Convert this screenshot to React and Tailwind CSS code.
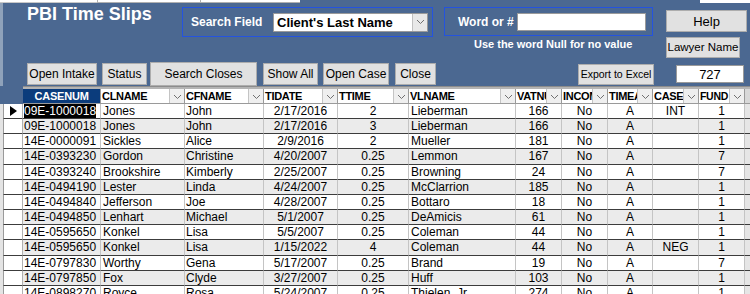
import React from 'react';

const font = "font-['Liberation_Sans',Arial,sans-serif]";

const columns = [
  { key: 'casenum', label: 'CASENUM', w: 'w-[78px]', align: 'text-left pl-[1px]' },
  { key: 'clname', label: 'CLNAME', w: 'w-[84px]', align: 'text-left pl-[2px]' },
  { key: 'cfname', label: 'CFNAME', w: 'w-[79px]', align: 'text-left pl-[1px]' },
  { key: 'tidate', label: 'TIDATE', w: 'w-[74px]', align: 'text-center' },
  { key: 'ttime', label: 'TTIME', w: 'w-[71px]', align: 'text-center' },
  { key: 'vlname', label: 'VLNAME', w: 'w-[107px]', align: 'text-left pl-[2px]' },
  { key: 'vatnum', label: 'VATNUM', w: 'w-[46px]', align: 'text-center' },
  { key: 'income', label: 'INCOME', w: 'w-[46px]', align: 'text-center' },
  { key: 'timea', label: 'TIMEAB', w: 'w-[45px]', align: 'text-center' },
  { key: 'casetype', label: 'CASETYPE', w: 'w-[46px]', align: 'text-center' },
  { key: 'fund', label: 'FUND', w: 'w-[46px]', align: 'text-center' },
];

const rows = [
  ['09E-1000018', 'Jones', 'John', '2/17/2016', '2', 'Lieberman', '166', 'No', 'A', 'INT', '1'],
  ['09E-1000018', 'Jones', 'John', '2/17/2016', '3', 'Lieberman', '166', 'No', 'A', '', '1'],
  ['14E-0000091', 'Sickles', 'Alice', '2/9/2016', '2', 'Mueller', '181', 'No', 'A', '', '1'],
  ['14E-0393230', 'Gordon', 'Christine', '4/20/2007', '0.25', 'Lemmon', '167', 'No', 'A', '', '7'],
  ['14E-0393240', 'Brookshire', 'Kimberly', '2/25/2007', '0.25', 'Browning', '24', 'No', 'A', '', '7'],
  ['14E-0494190', 'Lester', 'Linda', '4/24/2007', '0.25', 'McClarrion', '185', 'No', 'A', '', '1'],
  ['14E-0494840', 'Jefferson', 'Joe', '4/28/2007', '0.25', 'Bottaro', '18', 'No', 'A', '', '1'],
  ['14E-0494850', 'Lenhart', 'Michael', '5/1/2007', '0.25', 'DeAmicis', '61', 'No', 'A', '', '1'],
  ['14E-0595650', 'Konkel', 'Lisa', '5/5/2007', '0.25', 'Coleman', '44', 'No', 'A', '', '1'],
  ['14E-0595650', 'Konkel', 'Lisa', '1/15/2022', '4', 'Coleman', '44', 'No', 'A', 'NEG', '1'],
  ['14E-0797830', 'Worthy', 'Gena', '5/17/2007', '0.25', 'Brand', '19', 'No', 'A', '', '7'],
  ['14E-0797850', 'Fox', 'Clyde', '3/27/2007', '0.25', 'Huff', '103', 'No', 'A', '', '1'],
  ['14E-0898270', 'Royce', 'Rosa', '5/24/2007', '0.25', 'Thielen, Jr.', '274', 'No', 'A', '', '1'],
];

const Chevron = () => (
  <svg width="9" height="6" viewBox="0 0 9 6">
    <path d="M1 1 L4.5 4.5 L8 1" fill="none" stroke="#707070" strokeWidth="1" />
  </svg>
);

const Btn = ({ className, children }) => (
  <div className={`flex items-center justify-center border border-[#adadad] bg-[#e1e1e1] leading-none text-black whitespace-nowrap ${className}`}>
    {children}
  </div>
);

const Header = () => (
  <div className="bg-[#4b6891] border-l-[3px] border-[#8fa2ba]">
    {/* top controls */}
    <div className="flex h-[59px] items-start">
      <div className="ml-[24px] mt-[1px] w-[155px] text-[18px] font-bold leading-[20px] text-white whitespace-nowrap">
        PBI Time Slips
      </div>
      <div className="mt-[4px] flex h-[30px] w-[251px] items-center border border-[#2453df] pl-[8px] pr-[4px]">
        <span className="text-[12px] font-bold text-white whitespace-nowrap">Search Field</span>
        <div className="ml-auto flex h-[19px] w-[155px] items-center border border-[#9a9a9a] bg-white">
          <span className="pl-[3px] text-[13px] font-bold leading-none text-black whitespace-nowrap">Client's Last Name</span>
          <div className="ml-auto flex h-full w-[15px] items-center justify-center border-l border-[#c0c0c0] bg-[#e8e8e8]">
            <Chevron />
          </div>
        </div>
      </div>
      <div className="ml-[11px] flex flex-col">
        <div className="mt-[4px] flex h-[29px] w-[209px] items-center border border-[#2453df] pl-[13px] pr-[6px]">
          <span className="text-[12px] font-bold text-white whitespace-nowrap">Word or #</span>
          <div className="ml-auto h-[18px] w-[129px] border border-[#9a9a9a] bg-white" />
        </div>
        <div className="ml-[30px] mt-[2px] text-[11px] font-bold leading-[13px] text-white whitespace-nowrap">
          Use the word Null for no value
        </div>
      </div>
      <div className="ml-[13px] flex flex-col">
        <Btn className="mt-[7px] h-[22px] w-[81px] text-[13px]">Help</Btn>
        <Btn className="mt-[5px] h-[21px] w-[74px] text-[11.5px]">Lawyer Name</Btn>
      </div>
    </div>
    {/* buttons row */}
    <div className="flex h-[24px] items-center text-[12px]">
      <Btn className="ml-[24px] h-[22px] w-[70px]">Open Intake</Btn>
      <Btn className="ml-[5px] h-[22px] w-[45px]">Status</Btn>
      <Btn className="ml-[3px] h-[24px] w-[107px] bg-[#ccffcc]">Search Closes</Btn>
      <Btn className="ml-[6px] h-[22px] w-[55px]">Show All</Btn>
      <Btn className="ml-[5px] h-[22px] w-[66px]">Open Case</Btn>
      <Btn className="ml-[6px] h-[22px] w-[41px]">Close</Btn>
      <Btn className="ml-[142px] h-[21px] w-[76px] text-[10.5px]">Export to Excel</Btn>
      <div className="ml-[22px] flex h-[18px] w-[68px] items-center justify-center border border-[#9a9a9a] bg-white text-[13px] leading-none text-black">
        727
      </div>
    </div>
  </div>
);

const Datasheet = () => (
  <div>
    {/* strip above column headers */}
    <div className="flex h-[3px]">
      <div className="w-[23px] bg-[#4b6891]" />
      <div className="flex-1 border-t border-[#8c8c8c] bg-[#b4b4b4]" />
    </div>
    {/* column headers */}
    <div className="flex h-[15px]">
      <div className="w-[23px] bg-[#4b6891]" />
      {columns.map((c, i) =>
        i === 0 ? (
          <div key={c.key} className={`${c.w} flex items-center justify-center border-r border-b border-[#9a9a9a] bg-[#0b3c7c] text-[11px] font-bold tracking-[-0.2px] text-white`}>
            {c.label}
          </div>
        ) : (
          <div key={c.key} className={`${c.w} flex items-stretch overflow-hidden border-r border-b border-[#9a9a9a] bg-white`}>
            <span className={`min-w-0 flex-1 overflow-hidden pl-[1px] font-bold leading-[15px] tracking-[-0.3px] text-black whitespace-nowrap ${c.key === 'fund' ? 'text-[10.5px]' : 'text-[11px]'}`}>
              {c.label}
            </span>
            <div className="flex w-[15px] shrink-0 items-end justify-center border-l border-[#c4c4c4] bg-[#efefef] pb-[3px]">
              <Chevron />
            </div>
          </div>
        )
      )}
      <div className="flex-1 border-b border-[#9a9a9a] bg-[#d8d8d8]" />
    </div>
    {/* rows */}
    {rows.map((r, ri) => (
      <div
        key={ri}
        className={`flex ${ri === 3 || ri === 9 ? 'h-[16px]' : 'h-[15px]'} ${ri % 2 === 0 ? 'bg-white' : 'bg-[#ebebeb]'}`}
      >
        <div className="w-[3px] bg-[#e4e4e4]" />
        <div className="flex w-[20px] items-center justify-center border-l border-b border-r border-l-[#9a9a9a] border-b-[#3c3c3c] border-r-[#b0b0b0] bg-white">
          {ri === 0 && (
            <svg width="7" height="10" viewBox="0 0 7 10">
              <path d="M0 0 L7 5 L0 10 Z" fill="#000" />
            </svg>
          )}
        </div>
        {columns.map((c, ci) => (
          <div
            key={c.key}
            className={`${c.w} overflow-hidden border-r border-b border-r-[#c4c4c4] border-b-[#3c3c3c] pt-[1px] text-[12px] leading-[13px] text-black whitespace-nowrap ${c.align}`}
          >
            {ri === 0 && ci === 0 ? <span className="bg-black text-white">{r[ci]}</span> : r[ci]}
          </div>
        ))}
        <div className="flex-1 border-b border-[#3c3c3c] bg-[#e6e6e6]" />
      </div>
    ))}
  </div>
);

export default function App() {
  return (
    <div className={`${font} h-[294px] w-[750px] overflow-hidden bg-white`}>
      <div className="flex h-[3px]">
        <div className="w-[97px] border-b border-[#c8c8c8] bg-white" />
        <div className="w-[103px] border-l border-b border-[#b0b0b0] bg-white" />
        <div className="w-[100px] border-l border-b border-[#b0b0b0] bg-white" />
        <div className="w-[400px] bg-[#4b6891]" />
        <div className="flex-1 bg-white" />
      </div>
      <Header />
      <Datasheet />
    </div>
  );
}
